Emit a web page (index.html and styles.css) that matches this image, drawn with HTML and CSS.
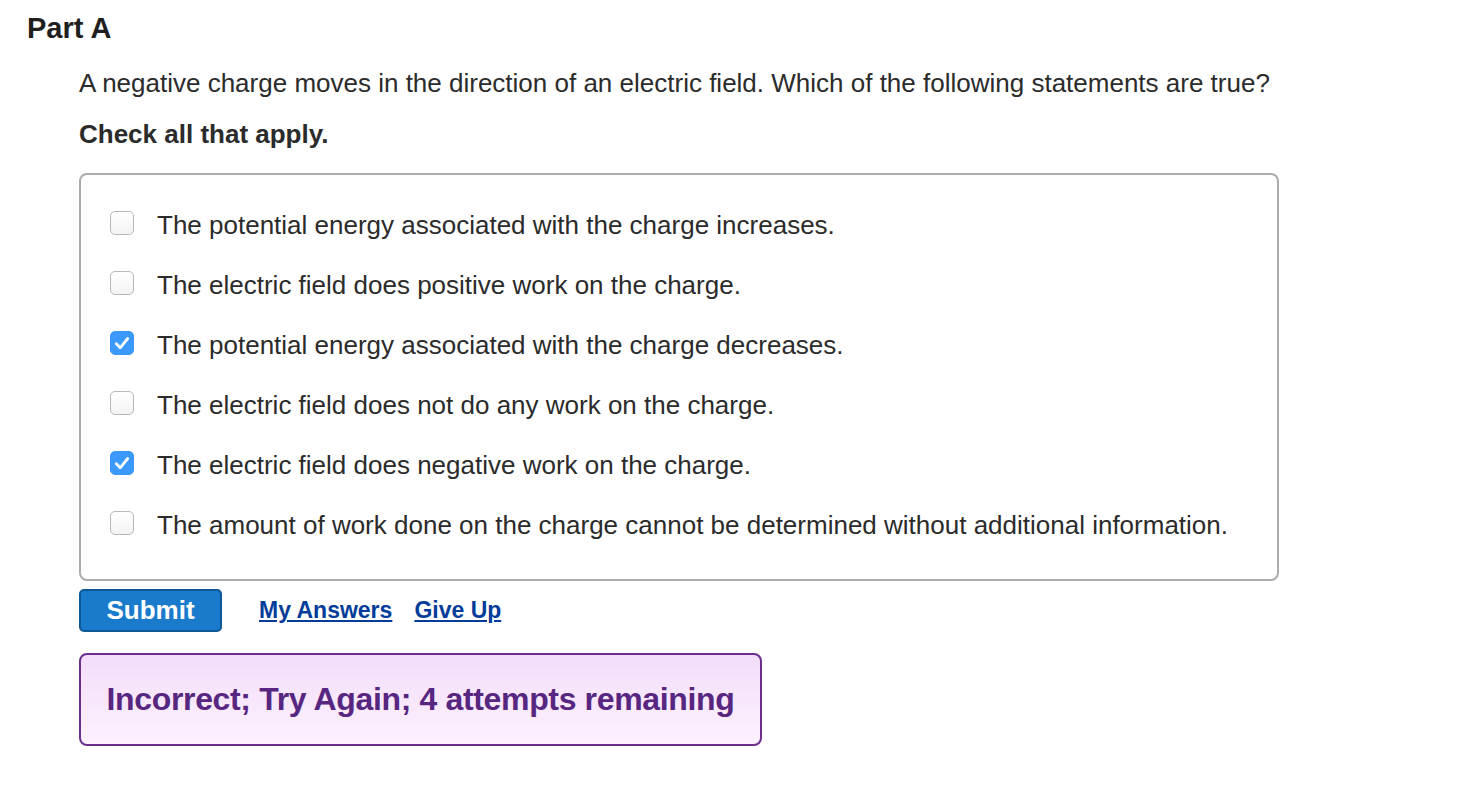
FILE: index.html
```html
<!DOCTYPE html>
<html lang="en">
<head>
    <meta charset="UTF-8">
    <title>Part A</title>
    <link rel="stylesheet" href="styles.css">
</head>
<body>
    <h2 class="part-title">Part A</h2>
    <div class="part-body">
        <p class="question">A negative charge moves in the direction of an electric field. Which of the following statements are true?</p>
        <p class="instruction">Check all that apply.</p>

        <div class="choices">
            <label class="choice"><span class="box"></span>The potential energy associated with the charge increases.</label>
            <label class="choice"><span class="box"></span>The electric field does positive work on the charge.</label>
            <label class="choice"><span class="box checked"><svg viewBox="0 0 24 24" width="24" height="24"><path d="M6.3 12.8l3.9 4 7.5-9.3" fill="none" stroke="#fff" stroke-width="2.8" stroke-linecap="round" stroke-linejoin="round"/></svg></span>The potential energy associated with the charge decreases.</label>
            <label class="choice"><span class="box"></span>The electric field does not do any work on the charge.</label>
            <label class="choice"><span class="box checked"><svg viewBox="0 0 24 24" width="24" height="24"><path d="M6.3 12.8l3.9 4 7.5-9.3" fill="none" stroke="#fff" stroke-width="2.8" stroke-linecap="round" stroke-linejoin="round"/></svg></span>The electric field does negative work on the charge.</label>
            <label class="choice"><span class="box"></span>The amount of work done on the charge cannot be determined without additional information.</label>
        </div>

        <div class="actions">
            <button class="submit">Submit</button>
            <a href="#" class="link">My Answers</a>
            <a href="#" class="link">Give Up</a>
        </div>

        <div class="feedback">Incorrect; Try Again; 4 attempts remaining</div>
    </div>
</body>
</html>
```

FILE: styles.css
```css
* {
    margin: 0;
    padding: 0;
    box-sizing: border-box;
}

body {
    font-family: 'Liberation Sans', Arial, sans-serif;
    background: #fff;
    color: #2b2b2b;
    padding: 12px 0 0 27px;
}

.part-title {
    font-size: 29px;
    font-weight: bold;
    line-height: 32px;
    color: #1f1f1f;
}

.part-body {
    width: 1200px;
    margin-left: 52px;
}

.question {
    font-size: 26px;
    line-height: 30px;
    margin-top: 24px;
}

.instruction {
    font-size: 26px;
    font-weight: bold;
    line-height: 30px;
    margin-top: 21px;
}

.choices {
    margin-top: 24px;
    border: 2px solid #acacac;
    border-radius: 8px;
    padding: 20px 0 24px 29px;
}

.choice {
    display: flex;
    align-items: center;
    height: 60px;
    font-size: 26px;
    line-height: 30px;
}

.box {
    width: 24px;
    height: 24px;
    margin: 0 23px 4px 0;
    border: 1px solid #b8b8b8;
    border-radius: 5px;
    background: linear-gradient(#fff, #f3f3f3);
    flex-shrink: 0;
}

.box.checked {
    border-color: #3b96f5;
    background: #3b99fc;
}

.box svg {
    display: block;
    margin: -1px;
}

.actions {
    display: flex;
    align-items: center;
    margin-top: 8px;
}

.submit {
    width: 143px;
    height: 43px;
    background: #1a7bcc;
    border: 2px solid #0f5896;
    border-radius: 5px;
    color: #fff;
    font-family: 'Liberation Sans', Arial, sans-serif;
    font-weight: bold;
    font-size: 26px;
    margin-right: 37px;
}

.link {
    font-size: 23px;
    font-weight: bold;
    color: #033d99;
    text-decoration: underline;
    margin-right: 22px;
}

.feedback {
    margin-top: 21px;
    width: 683px;
    height: 93px;
    border: 2px solid #6b2f8f;
    border-radius: 8px;
    background: linear-gradient(#f3ddfb, #fdf1fd);
    color: #572680;
    font-size: 32px;
    font-weight: bold;
    display: flex;
    align-items: center;
    justify-content: center;
    letter-spacing: -0.35px;
}
```
